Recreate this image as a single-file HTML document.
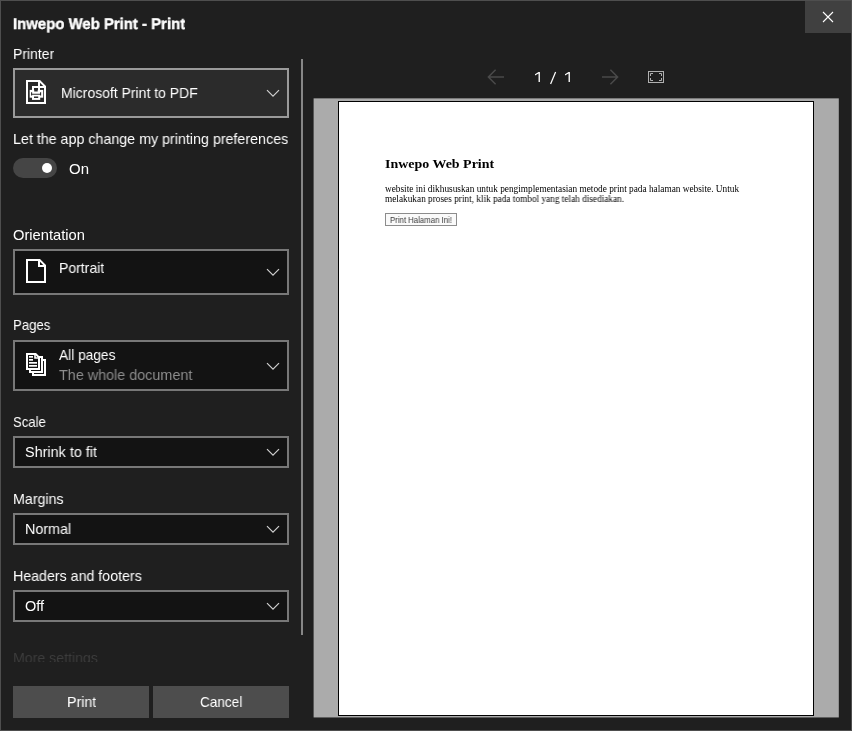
<!DOCTYPE html>
<html><head><meta charset="utf-8">
<style>
html,body{margin:0;padding:0;}
body{width:852px;height:731px;overflow:hidden;background:#1f1f1f;font-family:"Liberation Sans",sans-serif;position:relative;color:#fff;}
#win{position:absolute;left:0;top:0;width:850px;height:729px;border:1px solid #4e4e4e;background:#1f1f1f;}
.t{position:absolute;white-space:nowrap;line-height:20px;height:20px;color:#fff;transform-origin:0 50%;will-change:transform;}
.box{position:absolute;left:13px;width:272px;border:2px solid #787878;background:#131313;}
.btn{position:absolute;top:686px;height:32px;width:136px;background:#4d4d4d;}
.a{position:absolute;}
</style></head><body>
<div id="win"></div>
<!-- close button -->
<div class="a" style="left:805px;top:1px;width:46px;height:32px;background:#404040;"></div>
<svg class="a" style="left:822px;top:11px" width="12" height="12" viewBox="0 0 12 12"><path d="M1 1 L11 11 M11 1 L1 11" stroke="#fff" stroke-width="1.1" fill="none"/></svg>

<div class="box" style="top:68px;height:46px;border-color:#9a9a9a;background:#2b2b2b;"></div>
<div class="a" style="left:13px;top:158px;width:44px;height:20px;border-radius:10px;background:#454545;"></div>
<div class="a" style="left:42px;top:163px;width:10px;height:10px;border-radius:5px;background:#fff;"></div>
<div class="box" style="top:249px;height:42px;"></div>
<div class="box" style="top:340px;height:47px;"></div>
<div class="box" style="top:436px;height:28px;"></div>
<div class="box" style="top:513px;height:28px;"></div>
<div class="box" style="top:590px;height:28px;"></div>
<div class="btn" style="left:13px;"></div>
<div class="btn" style="left:153px;"></div>
<div class="t" id="title" style="left:12.60px;top:14.83px;font-size:15.5px;transform:scaleX(0.9626);font-weight:bold;text-rendering:geometricPrecision;-webkit-text-stroke:0.4px #fff;">Inwepo Web Print - Print</div>
<div class="t" id="l_printer" style="left:12.50px;top:43.78px;font-size:14.5px;transform:scaleX(0.9630);">Printer</div>
<div class="t" id="v_printer" style="left:60.80px;top:82.98px;font-size:14.5px;transform:scaleX(0.9640);">Microsoft Print to PDF</div>
<div class="t" id="l_let" style="left:12.50px;top:128.88px;font-size:14.5px;transform:scaleX(0.9838);">Let the app change my printing preferences</div>
<div class="t" id="v_on" style="left:68.80px;top:158.98px;font-size:14.5px;transform:scaleX(1.0324);">On</div>
<div class="t" id="l_orient" style="left:12.60px;top:224.78px;font-size:14.5px;transform:scaleX(1.0137);">Orientation</div>
<div class="t" id="v_portrait" style="left:58.50px;top:257.98px;font-size:14.5px;transform:scaleX(0.9663);">Portrait</div>
<div class="t" id="l_pages" style="left:12.50px;top:315.18px;font-size:14.5px;transform:scaleX(0.9092);">Pages</div>
<div class="t" id="v_all" style="left:58.70px;top:345.48px;font-size:14.5px;transform:scaleX(0.9453);">All pages</div>
<div class="t" id="v_whole" style="left:58.70px;top:364.68px;font-size:14.5px;transform:scaleX(0.9906);color:#8c8c8c;">The whole document</div>
<div class="t" id="l_scale" style="left:12.60px;top:411.68px;font-size:14.5px;transform:scaleX(0.9028);">Scale</div>
<div class="t" id="v_shrink" style="left:24.90px;top:442.18px;font-size:14.5px;transform:scaleX(0.9923);">Shrink to fit</div>
<div class="t" id="l_margins" style="left:12.50px;top:488.78px;font-size:14.5px;transform:scaleX(0.9820);">Margins</div>
<div class="t" id="v_normal" style="left:24.50px;top:519.38px;font-size:14.5px;transform:scaleX(0.9874);">Normal</div>
<div class="t" id="l_hf" style="left:12.50px;top:565.98px;font-size:14.5px;transform:scaleX(0.9798);">Headers and footers</div>
<div class="t" id="v_off" style="left:24.80px;top:596.28px;font-size:14.5px;transform:scaleX(0.9998);">Off</div>
<div class="t" id="b_print" style="left:66.50px;top:692.08px;font-size:14.5px;transform:scaleX(0.9794);">Print</div>
<div class="t" id="b_cancel" style="left:199.50px;top:692.08px;font-size:14.5px;transform:scaleX(0.9370);">Cancel</div>
<div class="a" style="left:0;top:640px;width:300px;height:22px;overflow:hidden;"><div class="t" id="l_more" style="left:12.80px;top:8.38px;font-size:14.5px;transform:scaleX(0.9749);color:#3d3d3d;">More settings</div>
</div>

<!-- printer icon -->
<svg class="a" style="left:26px;top:80px" width="20" height="24" viewBox="0 0 20 24">
<path fill-rule="evenodd" fill="#fff" d="M0 0H14L20 6V24H0Z M2 2V22H18V8H12V2Z M14 2.8V6H17.2Z"/>
<rect x="7" y="7" width="6" height="5" fill="none" stroke="#fff" stroke-width="2"/>
<rect x="3.7" y="9.9" width="13.5" height="7.8" fill="#fff"/>
<rect x="6" y="15.6" width="8.2" height="4.3" fill="#fff"/>
<rect x="8.2" y="8.2" width="3.5" height="3.3" fill="#2b2b2b"/>
<path d="M5.6 12.2V15.6 M14.6 12.2V15.6 M5.6 14.3H14.6" stroke="#2b2b2b" stroke-width="1.1" fill="none"/>
<rect x="8" y="16.5" width="4.2" height="1.5" fill="#2b2b2b"/>
</svg>
<!-- portrait icon -->
<svg class="a" style="left:26px;top:259px" width="20" height="24" viewBox="0 0 20 24">
<path fill-rule="evenodd" fill="#fff" d="M0 0H14L20 6V24H0Z M2 2V22H18V8H12V2Z M14 2.8V6H17.2Z"/>
</svg>
<!-- pages icon -->
<svg class="a" style="left:26px;top:353px" width="20" height="23" viewBox="0 0 20 23">
<rect x="7" y="7" width="12" height="15" fill="#131313" stroke="#fff" stroke-width="2"/>
<rect x="4" y="4" width="12" height="15" fill="#131313" stroke="#fff" stroke-width="2"/>
<path d="M1 1H9.6L13 4.4V16H1Z" fill="#131313" stroke="#fff" stroke-width="2"/>
<path d="M9 1V5H13" fill="none" stroke="#fff" stroke-width="1.6"/>
<rect x="3" y="3" width="4" height="1.7" fill="#fff"/>
<rect x="3" y="6" width="4" height="1.7" fill="#fff"/>
<rect x="3" y="9" width="8" height="1.7" fill="#fff"/>
<rect x="3" y="12" width="8" height="1.7" fill="#fff"/>
</svg>
<!-- nav arrows -->
<svg class="a" style="left:487px;top:69px" width="18" height="16" viewBox="0 0 18 16"><path d="M17 8H1.5 M8.6 0.8L1.4 8L8.6 15.2" stroke="#4a4a4a" stroke-width="1.5" fill="none"/></svg>
<svg class="a" style="left:601px;top:69px" width="18" height="16" viewBox="0 0 18 16"><path d="M1 8H16.5 M9.4 0.8L16.6 8L9.4 15.2" stroke="#4a4a4a" stroke-width="1.5" fill="none"/></svg>
<!-- fullscreen -->
<svg class="a" style="left:648px;top:71px" width="16" height="12" viewBox="0 0 16 12">
<rect x="0.5" y="0.5" width="15" height="11" fill="none" stroke="#b0b0b0" stroke-width="1"/>
<path d="M2.5 5V2.5H5 M11 2.5H13.5V5 M13.5 7V9.5H11 M5 9.5H2.5V7" fill="none" stroke="#b0b0b0" stroke-width="1"/>
</svg>
<svg style="position:absolute;left:266px;top:89px" width="14" height="9" viewBox="0 0 14 9"><path d="M1 1.2 L7 7.2 L13 1.2" stroke="#d0d0d0" stroke-width="1.2" fill="none"/></svg>
<svg style="position:absolute;left:266px;top:268px" width="14" height="9" viewBox="0 0 14 9"><path d="M1 1.2 L7 7.2 L13 1.2" stroke="#d0d0d0" stroke-width="1.2" fill="none"/></svg>
<svg style="position:absolute;left:266px;top:362px" width="14" height="9" viewBox="0 0 14 9"><path d="M1 1.2 L7 7.2 L13 1.2" stroke="#d0d0d0" stroke-width="1.2" fill="none"/></svg>
<svg style="position:absolute;left:266px;top:448px" width="14" height="9" viewBox="0 0 14 9"><path d="M1 1.2 L7 7.2 L13 1.2" stroke="#d0d0d0" stroke-width="1.2" fill="none"/></svg>
<svg style="position:absolute;left:266px;top:525px" width="14" height="9" viewBox="0 0 14 9"><path d="M1 1.2 L7 7.2 L13 1.2" stroke="#d0d0d0" stroke-width="1.2" fill="none"/></svg>
<svg style="position:absolute;left:266px;top:602px" width="14" height="9" viewBox="0 0 14 9"><path d="M1 1.2 L7 7.2 L13 1.2" stroke="#d0d0d0" stroke-width="1.2" fill="none"/></svg>

<!-- scrollbar -->
<div class="a" style="left:301px;top:59px;width:2px;height:576px;background:#868686;"></div>
<svg class="a" style="left:534px;top:70px" width="8" height="14" viewBox="0 0 8 14"><path d="M4.55 1.9H5.9V12H4.55V3.5L1 5.5V4.3Z" fill="#fff"/></svg>
<svg class="a" style="left:548px;top:70px" width="10" height="16" viewBox="0 0 10 16"><path d="M2.6 14.1L7.6 2.1" stroke="#fff" stroke-width="1.25" fill="none"/></svg>
<svg class="a" style="left:564.1px;top:70px" width="8" height="14" viewBox="0 0 8 14"><path d="M4.55 1.9H5.9V12H4.55V3.5L1 5.5V4.3Z" fill="#fff"/></svg>

<!-- preview -->
<svg class="a" style="left:312px;top:97px" width="530" height="623" viewBox="0 0 530 623"><rect x="1.6" y="1.35" width="525.2" height="619.1" fill="#ababab"/></svg>
<div class="a" style="left:338px;top:101px;width:474px;height:613px;border:1px solid #000;background:#fff;"></div>
<div class="t" id="p_h" style="left:384.70px;top:154.11px;font-size:13px;transform:scaleX(1.0742);font-family:'Liberation Serif',serif;color:#000;font-weight:bold;">Inwepo Web Print</div>
<div class="t" id="p_1" style="left:384.50px;top:178.86px;font-size:9.3px;transform:scaleX(1.0002);font-family:'Liberation Serif',serif;color:#000;">website ini dikhususkan untuk pengimplementasian metode print pada halaman website. Untuk</div>
<div class="t" id="p_2" style="left:384.50px;top:189.26px;font-size:9.3px;transform:scaleX(0.9977);font-family:'Liberation Serif',serif;color:#000;">melakukan proses print, klik pada tombol yang telah disediakan.</div>
<div class="a" style="left:385px;top:213px;width:72px;height:13px;border:1px solid #8c8c8c;background:#fafafa;box-sizing:border-box;"></div>
<div class="t" id="p_b" style="left:389.70px;top:209.89px;font-size:8.4px;transform:scaleX(0.9300);color:#3a3a3a;">Print Halaman Ini!</div>
</body></html>
